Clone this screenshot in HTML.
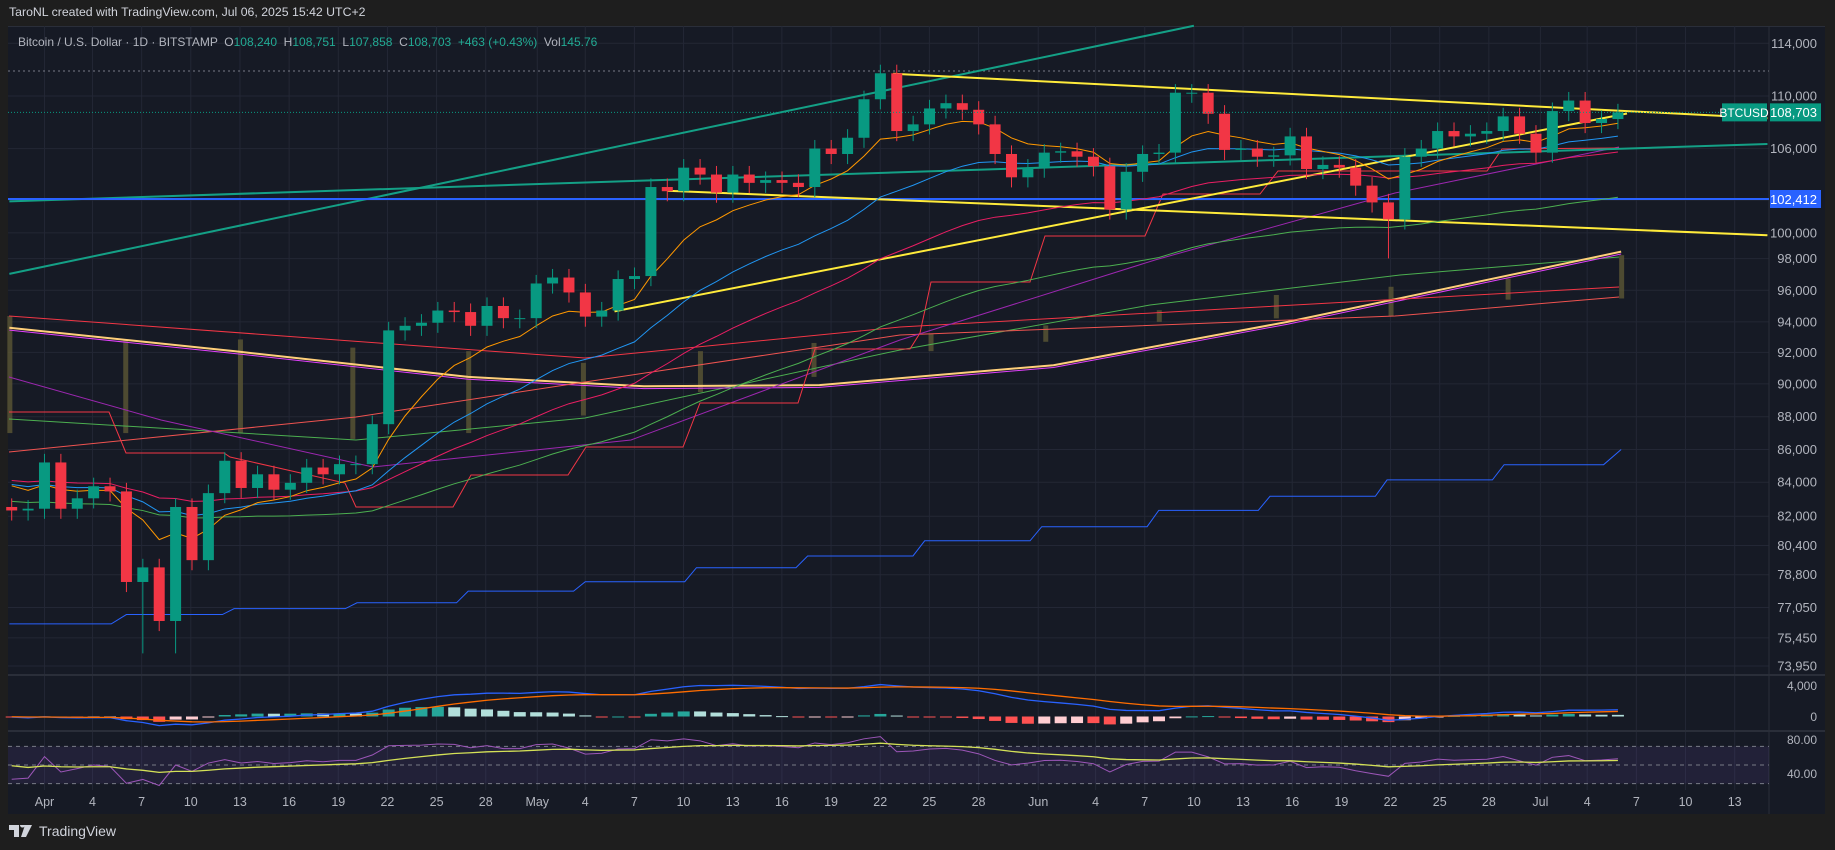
<!DOCTYPE html>
<html><head><meta charset="utf-8"><style>
html,body{margin:0;padding:0;background:#1e1e1e;width:1835px;height:850px;overflow:hidden;font-family:"Liberation Sans",sans-serif}
#hdr{position:absolute;left:9px;top:5px;color:#d1d4dc;font-size:12.3px}
#logo{position:absolute;left:9px;top:823px;color:#d1d4dc;font-size:14px;display:flex;align-items:center;gap:4px}
svg{position:absolute;left:0;top:0}
</style></head><body>
<div id="hdr">TaroNL created with TradingView.com, Jul 06, 2025 15:42 UTC+2</div>
<svg id="s" width="1835" height="850" xmlns="http://www.w3.org/2000/svg"></svg>
<div id="logo"><svg width="26" height="12" viewBox="0 0 26 12" style="position:static"><path d="M0 0h10v12h-5v-7h-5z M11 0a2.5 2.5 0 1 1 0 .1z M16 0h7l-6 12h-5z" fill="#d1d4dc"/></svg><span>TradingView</span></div>
<script>
const S=1.1705,svg=document.getElementById('s');let h='';
const L=8,R=1769,T=26,B=814,MB=673;
function Y(p){return 44+(Math.log(114000)-Math.log(p*1000))*1437}
function X(i){return 11.7+16.39*i}
h+=`<rect x="${L}" y="${T}" width="${1825-L}" height="${B-T}" fill="#161a25"/>`;
h+=`<rect x="${L}" y="${T}" width="${1825-L}" height="1" fill="#2a2e39"/>`;
const dl=['Apr','4','7','10','13','16','19','22','25','28','May','4','7','10','13','16','19','22','25','28','Jun','4','7','10','13','16','19','22','25','28','Jul','4','7','10','13'];
const dx=[38,79,121,163,205,247,289,331,373,415,459,500,542,584,626,668,710,752,794,836,887,936,978,1020,1062,1104,1146,1188,1230,1272,1316,1356,1398,1440,1482];
dx.forEach((x,k)=>{const ax=x*S;h+=`<line x1="${ax}" y1="${T}" x2="${ax}" y2="790" stroke="#232735" stroke-width="1"/>`;h+=`<text x="${ax}" y="806" fill="#b2b5be" font-size="12.5" text-anchor="middle">${dl[k]}</text>`});
const pl=[[114000,37],[110000,82],[106000,127],[102000,171],[100000,199],[98000,221],[96000,248],[94000,275],[92000,301],[90000,328],[88000,356],[86000,384],[84000,412],[82000,441],[80400,466],[78800,491],[77050,519],[75450,545],[73950,569]];
pl.forEach(([p,y])=>{const ay=y*S;h+=`<line x1="${L}" y1="${ay}" x2="${R}" y2="${ay}" stroke="#232735"/>`;if(p!=102000)h+=`<text x="1817" y="${ay+4.5}" fill="#b2b5be" font-size="13" text-anchor="end">${p.toLocaleString('en-US')}</text>`});
h+=`<line x1="${R}" y1="${T}" x2="${R}" y2="${B}" stroke="#2a2e39"/>`;
h+=`<line x1="${L}" y1="675" x2="1825" y2="675" stroke="#2a2e39" stroke-width="2"/><line x1="${L}" y1="731" x2="1825" y2="731" stroke="#2a2e39" stroke-width="2"/>`;
h+=`<line x1="${L}" y1="71" x2="${R}" y2="71" stroke="#787b86" stroke-dasharray="2 3"/>`;
function pline(pts,c,w,sc){return `<polyline points="${pts.map(p=>sc?(p[0]*S)+','+(p[1]*S):p.join(',')).join(' ')}" fill="none" stroke="${c}" stroke-width="${w}"/>`}
[[8,270,370],[107,290,370],[205,290,370],[301,297,375],[400,300,370],[498,310,355],[598,300,335],[695,293,322],[795,285,300],[893,278,292],[990,265,275],[1090,252,272],[1188,245,270],[1288,238,256],[1385,218,255]].forEach(b=>{h+=`<rect x="${b[0]*S-2}" y="${b[1]*S}" width="5" height="${(b[2]-b[1])*S}" fill="#5b5635" opacity=".8"/>`});
// hand lines (actual coords)
h+=pline([[9,419],[356,440],[585,418],[900,350],[1150,305],[1400,275],[1619,257]],'#4caf50',1);
h+=pline([[8,280],[200,300],[400,322],[550,330],[700,329],[900,312],[1100,275],[1385,215]],'#ffcf7a',2,1);
h+=pline([[8,282],[200,302],[400,324],[550,332],[700,331],[900,314],[1100,277],[1385,217]],'#e040fb',1,1);
h+=pline([[9,316],[585,358],[900,327],[1619,287]],'#f23645',1);
h+=pline([[9,452],[356,417],[585,382],[900,335],[1395,316],[1619,297]],'#ef5350',1);
h+=pline([[9,377],[161,420],[373,467],[631,440],[900,340],[1155,260],[1395,193],[1619,147]],'#9c27b0',1);
h+=pline([[8,533],[95,533],[108,525],[190,525],[200,520],[295,520],[305,515],[390,515],[400,505],[490,505],[500,497],[585,497],[595,485],[680,485],[690,475],[780,475],[790,462],[880,462],[890,450],[980,450],[990,436],[1075,436],[1085,424],[1175,424],[1185,410],[1275,410],[1285,397],[1370,397],[1385,384]],'#2962ff',1,1);
h+=pline([[9,412],[109,412],[126,453],[224,453],[230,457],[345,483],[356,507],[453,507],[471,475],[568,475],[586,447],[683,447],[700,403],[798,403],[815,349],[910,349],[920,333],[931,282],[1030,282],[1045,236],[1145,236],[1163,194],[1260,194],[1278,171],[1487,171],[1502,149],[1619,148]],'#f23645',1);
h+=pline([[8,234],[1020,22]],'#14a086',2,1);
h+=pline([[8,172],[1510,123]],'#14a086',2,1);
h+=`<line x1="${L}" y1="199" x2="${R}" y2="199" stroke="#2962ff" stroke-width="2"/>`;
h+=pline([[763,63],[1510,101]],'#ffeb3b',2,1);
h+=pline([[570,163],[1510,201]],'#ffeb3b',2,1);
h+=pline([[525,266],[1390,97]],'#ffeb3b',2,1);
const C=[82.4,82.5,85.2,82.5,83.1,83.8,83.5,78.4,79.2,76.3,82.6,79.6,83.4,85.3,83.7,84.5,83.6,84.0,84.9,84.5,85.1,85.1,87.5,93.4,93.7,93.9,94.7,94.6,93.7,95.0,94.2,94.2,96.5,96.9,95.9,94.3,94.7,96.8,97.0,103.2,102.9,104.6,104.1,102.8,104.1,103.5,103.7,103.5,103.2,106.0,105.6,106.8,109.7,111.7,107.3,107.8,109.0,109.4,108.9,107.8,105.6,103.9,104.6,105.7,105.8,105.4,104.7,101.6,104.3,105.6,105.7,110.2,110.2,108.6,105.9,106.0,105.4,105.5,106.9,104.5,104.8,104.6,103.3,102.1,100.9,105.4,106.0,107.3,106.9,107.1,107.3,108.4,107.1,105.7,108.8,109.6,107.9,108.2,108.7];
const warm=[];for(let i=0;i<60;i++)warm.push(86+2*Math.sin(i/4)-i*0.05);
const all=warm.concat([82.6]).concat(C);const off=warm.length+1;
function ema(a,n){const k=2/(n+1);let e=a[0];return a.map(v=>e=v*k+e*(1-k))}
function lineOf(arr,c,w){let p=[];for(let i=0;i<C.length;i++)p.push([X(i),Y(arr[i+off])]);return pline(p,c,w)}
h+=lineOf(ema(all.map(v=>v-1.5),60),'#4caf50',1);
h+=lineOf(ema(all,40),'#e91e63',1);
h+=lineOf(ema(all,22),'#2196f3',1);
h+=lineOf(ema(all,9),'#ff9800',1);
let prev=82.6;C.forEach((c,i)=>{const o=prev;prev=c;const up=c>=o;const col=up?'#089981':'#f23645';const hi=Math.max(o,c)*1.006,lo=Math.min(o,c)*0.993;const x=X(i);
let lw=lo;if(i==8)lw=74.6;if(i==10)lw=74.6;if(i==84)lw=98.2;
h+=`<line x1="${x}" y1="${Y(hi)}" x2="${x}" y2="${Y(lw)}" stroke="${col}"/>`;
const y1=Y(Math.max(o,c)),y2=Y(Math.min(o,c));h+=`<rect x="${x-5.5}" y="${y1}" width="11" height="${Math.max(1,y2-y1)}" fill="${col}"/>`});
h+=`<line x1="${L}" y1="${Y(108.703)}" x2="${R}" y2="${Y(108.703)}" stroke="#089981" stroke-dasharray="1 2"/>`;
h+=`<rect x="1722" y="${Y(108.703)-9}" width="45" height="18" fill="#089981"/><text x="1744" y="${Y(108.703)+4.5}" fill="#fff" font-size="12" text-anchor="middle">BTCUSD</text>`;
h+=`<rect x="1770" y="${Y(108.703)-9}" width="51" height="18" fill="#089981"/><text x="1817" y="${Y(108.703)+4.5}" fill="#fff" font-size="13" text-anchor="end">108,703</text>`;
h+=`<rect x="1770" y="190" width="51" height="18" fill="#2962ff"/><text x="1817" y="204" fill="#fff" font-size="13" text-anchor="end">102,412</text>`;
const m12=ema(all,12),m26=ema(all,26),mac=m12.map((v,i)=>(v-m26[i])*1000),sig=ema(mac,9);
const MZ=716.5,MS=30/4000;let mp=[],sp=[];
for(let i=0;i<C.length;i++){const j=i+off,hv=mac[j]-sig[j],hp=mac[j-1]-sig[j-1];let col=hv>=0?(hv>=hp?'#26a69a':'#b2dfdb'):(hv<hp?'#ff5252':'#ffcdd2');const y=MZ-hv*MS;h+=`<rect x="${X(i)-6}" y="${Math.min(y,MZ)}" width="12" height="${Math.max(1,Math.abs(hv*MS))}" fill="${col}"/>`;mp.push([X(i),MZ-mac[j]*MS]);sp.push([X(i),MZ-sig[j]*MS])}
h+=pline(mp,'#2962ff',1.3)+pline(sp,'#ff6d00',1.3);
h+=`<text x="1817" y="690" fill="#b2b5be" font-size="12" text-anchor="end">4,000</text><text x="1817" y="721" fill="#b2b5be" font-size="12" text-anchor="end">0</text>`;
const RY=r=>765-(r-50)*0.93;
h+=`<rect x="${L}" y="${RY(70)}" width="${R-L}" height="${RY(30)-RY(70)}" fill="#7e57c2" opacity=".12"/>`;
[70,50,30].forEach(r=>h+=`<line x1="${L}" y1="${RY(r)}" x2="${R}" y2="${RY(r)}" stroke="#787b86" stroke-dasharray="4 4"/>`);
let ag=0,al=0;const rsi=[];for(let j=1;j<all.length;j++){const d=all[j]-all[j-1];const g=Math.max(d,0),l=Math.max(-d,0);ag=(ag*13+g)/14;al=(al*13+l)/14;rsi[j]=al==0?100:100-100/(1+ag/al)}rsi[0]=50;
const rma=ema(rsi,14);let rp=[],qp=[];for(let i=0;i<C.length;i++){rp.push([X(i),RY(rsi[i+off])]);qp.push([X(i),RY(rma[i+off])])}
h+=pline(rp,'#9c56b8',1)+pline(qp,'#d4e157',1.3);
h+=`<text x="1817" y="744" fill="#b2b5be" font-size="12" text-anchor="end">80.00</text><text x="1817" y="778" fill="#b2b5be" font-size="12" text-anchor="end">40.00</text>`;
h+=`<text x="18" y="46" font-size="12" fill="#b2b5be" style="white-space:pre">Bitcoin / U.S. Dollar · 1D · BITSTAMP  O<tspan fill="#22ab94">108,240</tspan>  H<tspan fill="#22ab94">108,751</tspan>  L<tspan fill="#22ab94">107,858</tspan>  C<tspan fill="#22ab94">108,703</tspan>  <tspan fill="#22ab94">+463 (+0.43%)</tspan>  Vol<tspan fill="#22ab94">145.76</tspan></text>`;
svg.innerHTML=h;
</script>
</body></html>
